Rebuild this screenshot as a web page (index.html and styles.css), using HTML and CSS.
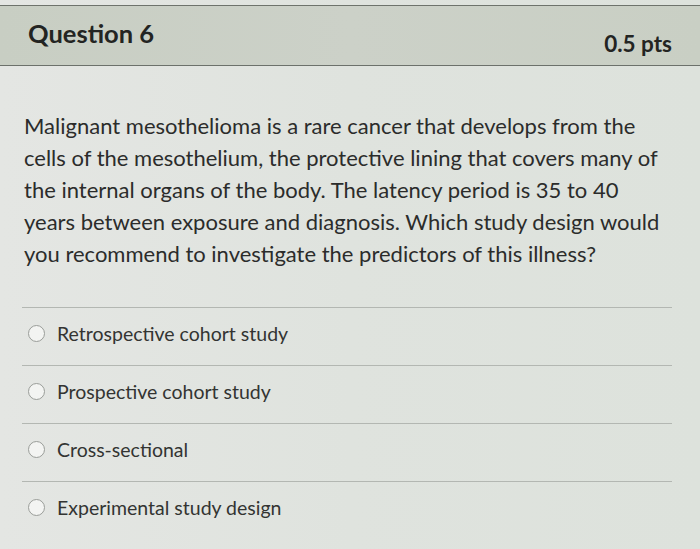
FILE: index.html
```html
<!DOCTYPE html>
<html>
<head>
<meta charset="utf-8">
<link rel="stylesheet" href="styles.css">
</head>
<body>
<div class="page">
  <div class="quiz">
    <div class="header">
      <h2 class="title">Question 6</h2>
      <span class="pts">0.5 pts</span>
    </div>
    <div class="content">
      <p class="text">Malignant mesothelioma is a rare cancer that develops from the cells of the mesothelium, the protective lining that covers many of the internal organs of the body. The latency period is 35 to 40 years between exposure and diagnosis. Which study design would you recommend to investigate the predictors of this illness?</p>
      <div class="answers">
        <label class="answer"><span class="radio"></span><span class="label">Retrospective cohort study</span></label>
        <label class="answer"><span class="radio"></span><span class="label">Prospective cohort study</span></label>
        <label class="answer"><span class="radio"></span><span class="label">Cross-sectional</span></label>
        <label class="answer"><span class="radio"></span><span class="label">Experimental study design</span></label>
      </div>
    </div>
  </div>
</div>
</body>
</html>
```

FILE: styles.css
```css
html, body {
  margin: 0;
  padding: 0;
}
body {
  width: 700px;
  height: 549px;
  overflow: hidden;
  background: linear-gradient(90deg, #e4e6e3 0%, #dfe3de 50%, #dde2dc 100%);
  font-family: Lato, "Open Sans", sans-serif;
  color: #2b2c2b;
}
.page {
  padding-top: 5px;
}
.header {
  display: flex;
  justify-content: space-between;
  align-items: flex-start;
  height: 59px;
  background: linear-gradient(90deg, #c8cec3 0%, #ccd1c8 50%, #c9cfc4 100%);
  border-top: 1px solid #6e736c;
  border-bottom: 1px solid #6c716b;
  padding: 0 28px;
}
.title {
  margin: 12px 0 0;
  font-size: 25.5px;
  font-weight: 700;
  line-height: 1.2;
  color: #232422;
}
.pts {
  margin-top: 24px;
  font-size: 22.5px;
  font-weight: 700;
  line-height: 1.2;
  color: #232422;
}
.content {
  padding: 0 30px 0 24px;
}
.text {
  margin: 44px 0 0;
  font-size: 22px;
  line-height: 32px;
  color: #2b2c2b;
}
.answers {
  margin-top: 37px;
  margin-left: -2px;
  margin-right: -2px;
}
.answer {
  display: flex;
  align-items: center;
  gap: 12px;
  height: 50px;
  padding: 0 0 7px 6px;
  border-top: 1px solid #b3b7b2;
  font-size: 19.5px;
  color: #333432;
}
.radio {
  width: 15px;
  height: 15px;
  border: 1.5px solid #9a9d99;
  border-radius: 50%;
  background: #f3f4f2;
  flex: none;
}
```
